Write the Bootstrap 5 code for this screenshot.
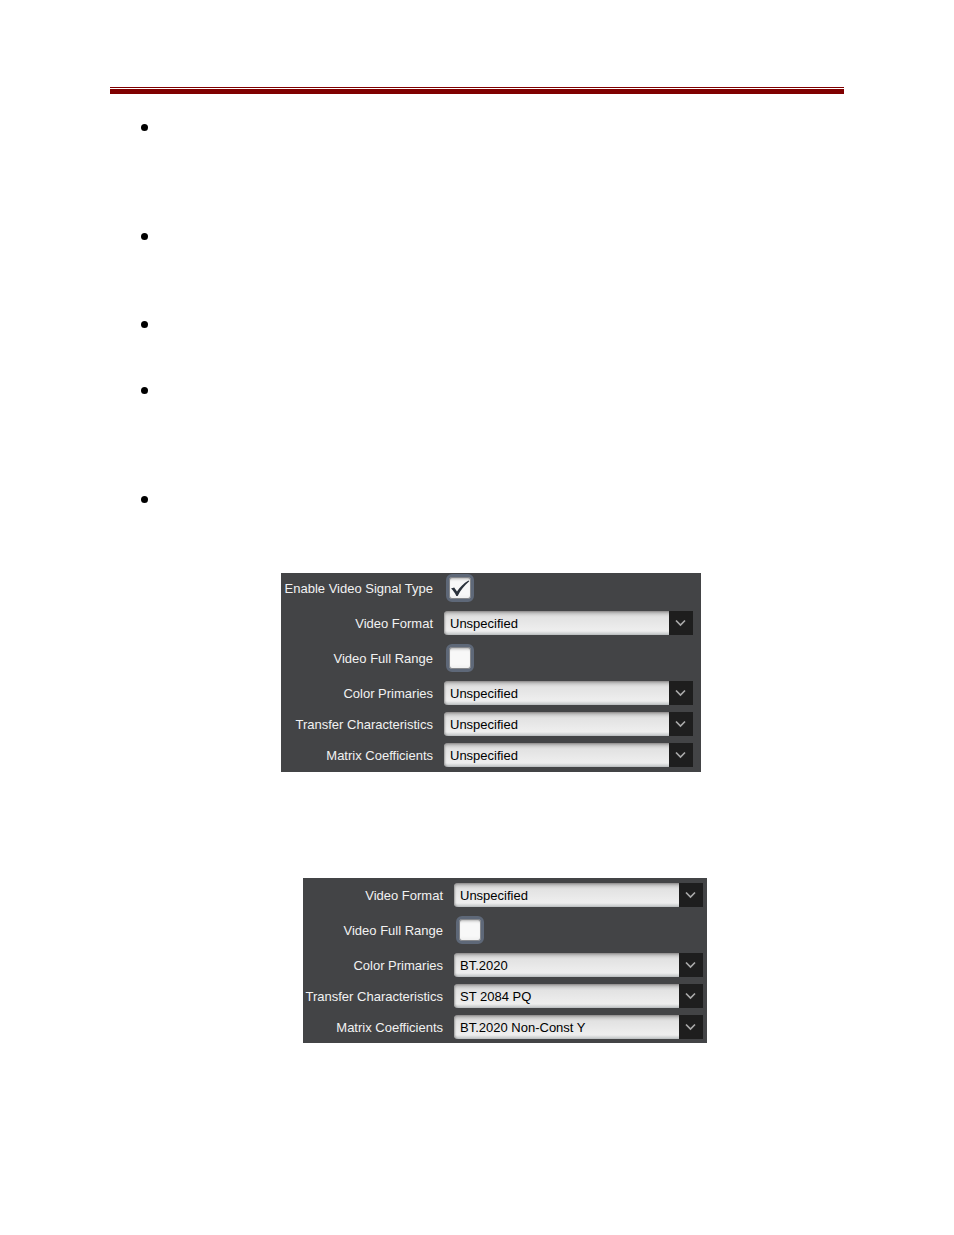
<!DOCTYPE html>
<html lang="en">
<head>
<meta charset="utf-8">
<meta name="viewport" content="width=device-width, initial-scale=1">
<title>Video Signal Type</title>
<link href="https://cdn.jsdelivr.net/npm/bootstrap@5.3.0/dist/css/bootstrap.min.css" rel="stylesheet">
<style>
  body { background: #fff; font-family: "Liberation Sans", Arial, sans-serif; }
  .sheet { padding: 87px 110px 192px; }
  .header-rule { height: 7px; border-top: 1px solid #800000; border-bottom: 5px solid #800000; }
  .topics { padding: 30px 0 0 31px; }
  .topics li { height: 88px; }
  .topics li::before { content: ""; display: block; width: 7px; height: 7px; border-radius: 50%; background: #000; }
  .topics .tall { height: 109px; }
  .topics .short { height: 66px; }
  .topics .final { height: 77px; }

  .settings { background: #434446; }
  .settings-main { width: 420px; max-width: 100%; padding: 1px 8px 5px 0; margin-left: 171px; --label-end: 11px; --label-width: 163px; }
  .settings-hdr { width: 404px; max-width: 100%; padding: 5px 4px 4px 0; margin: 106px 0 0 193px; --label-end: 11px; --label-width: 151px; }
  .field + .field { margin-top: 7px; }
  .field + .field-check, .field-check + .field { margin-top: 9px; }
  .field label { flex: 0 0 var(--label-width); padding: 2px var(--label-end) 0 0; text-align: right; white-space: nowrap; font-size: 13px; line-height: 22px; color: #f2f2f2; }

  .picker { height: 24px; min-width: 0; }
  .picker select { appearance: none; display: block; width: 100%; height: 24px; padding: 2px 30px 0 6px; border: 0; border-radius: 4px 0 0 4px; font-size: 13px; line-height: 22px; color: #000;
    background: linear-gradient(#8b8888 0, #bcbcbc 2px, #d6d6d6 4px, #e2e2e2 6px, #ececec 17px, #eee 20px, #c9cccd 23px, #b9bdc0 24px);
    box-shadow: inset 2px 0 2px -1px #999; }
  .picker svg { position: absolute; top: 0; right: 0; pointer-events: none; }

  .tick { width: 28px; height: 28px; margin-left: 2px; }
  .tick input { appearance: none; display: block; width: 28px; height: 28px; margin: 0; border: 3px solid #5e6878; border-radius: 6px;
    background: linear-gradient(#e4e4e4, #f8f8f8 5px, #f8f8f8 17px, #eee); background-clip: padding-box; background-color: #5e6878; box-shadow: inset 0 0 0 1px #85878b, inset 0 2px 2px #bbb; }
  .tick svg { position: absolute; top: 0; left: 0; pointer-events: none; display: none; }
  .tick input:checked + svg { display: block; }
</style>
<script src="https://cdn.jsdelivr.net/npm/bootstrap@5.3.0/dist/js/bootstrap.bundle.min.js"></script>
</head>
<body>
<svg class="d-none" aria-hidden="true">
  <symbol id="chevron" viewBox="0 0 24 24"><path fill="#1e1e1e" d="M0 0h24v24H0z"/><path d="M7 9.500l4.500 4.500 4.500-4.500" fill="none" stroke="#a9a9a9" stroke-width="1.700"/></symbol>
  <symbol id="check" viewBox="0 0 28 28"><path fill="#2b323c" d="M5 14.500l3.200-1 2.800 4C14 13 17.500 9.500 22.500 6.500l.8.8C18.500 11.500 14.500 16 11.700 22h-1.400C9 19 7.300 16.500 5 14.500z"/></symbol>
</svg>
<main class="sheet">
  <div class="header-rule"></div>
  <ul class="topics list-unstyled mb-0">
    <li class="tall"></li>
    <li></li>
    <li class="short"></li>
    <li class="tall"></li>
    <li class="final"></li>
  </ul>

  <form class="settings settings-main">
    <div class="field field-check d-flex align-items-center">
      <label for="enable">Enable Video Signal Type</label>
      <div class="tick position-relative"><input type="checkbox" id="enable" checked><svg width="28" height="28"><use href="#check"/></svg></div>
    </div>
    <div class="field d-flex align-items-center">
      <label for="format">Video Format</label>
      <div class="picker position-relative flex-grow-1"><select id="format"><option>Unspecified</option></select><svg width="24" height="24"><use href="#chevron"/></svg></div>
    </div>
    <div class="field field-check d-flex align-items-center">
      <label for="range">Video Full Range</label>
      <div class="tick position-relative"><input type="checkbox" id="range"><svg width="28" height="28"><use href="#check"/></svg></div>
    </div>
    <div class="field d-flex align-items-center">
      <label for="primaries">Color Primaries</label>
      <div class="picker position-relative flex-grow-1"><select id="primaries"><option>Unspecified</option></select><svg width="24" height="24"><use href="#chevron"/></svg></div>
    </div>
    <div class="field d-flex align-items-center">
      <label for="transfer">Transfer Characteristics</label>
      <div class="picker position-relative flex-grow-1"><select id="transfer"><option>Unspecified</option></select><svg width="24" height="24"><use href="#chevron"/></svg></div>
    </div>
    <div class="field d-flex align-items-center">
      <label for="matrix">Matrix Coefficients</label>
      <div class="picker position-relative flex-grow-1"><select id="matrix"><option>Unspecified</option></select><svg width="24" height="24"><use href="#chevron"/></svg></div>
    </div>
  </form>

  <form class="settings settings-hdr">
    <div class="field d-flex align-items-center">
      <label for="hdr-format">Video Format</label>
      <div class="picker position-relative flex-grow-1"><select id="hdr-format"><option>Unspecified</option></select><svg width="24" height="24"><use href="#chevron"/></svg></div>
    </div>
    <div class="field field-check d-flex align-items-center">
      <label for="hdr-range">Video Full Range</label>
      <div class="tick position-relative"><input type="checkbox" id="hdr-range"><svg width="28" height="28"><use href="#check"/></svg></div>
    </div>
    <div class="field d-flex align-items-center">
      <label for="hdr-primaries">Color Primaries</label>
      <div class="picker position-relative flex-grow-1"><select id="hdr-primaries"><option>BT.2020</option></select><svg width="24" height="24"><use href="#chevron"/></svg></div>
    </div>
    <div class="field d-flex align-items-center">
      <label for="hdr-transfer">Transfer Characteristics</label>
      <div class="picker position-relative flex-grow-1"><select id="hdr-transfer"><option>ST 2084 PQ</option></select><svg width="24" height="24"><use href="#chevron"/></svg></div>
    </div>
    <div class="field d-flex align-items-center">
      <label for="hdr-matrix">Matrix Coefficients</label>
      <div class="picker position-relative flex-grow-1"><select id="hdr-matrix"><option>BT.2020 Non-Const Y</option></select><svg width="24" height="24"><use href="#chevron"/></svg></div>
    </div>
  </form>
</main>
</body>
</html>
